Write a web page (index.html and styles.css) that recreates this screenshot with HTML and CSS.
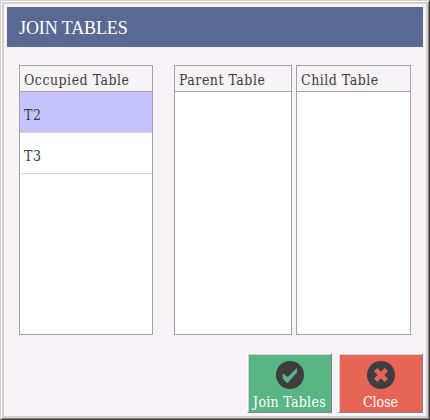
FILE: index.html
```html
<!DOCTYPE html>
<html lang="en">
<head>
<meta charset="utf-8">
<title>Join Tables</title>
<link rel="stylesheet" href="styles.css">
</head>
<body>
<main class="window">
  <div class="frame">
    <h1 class="title">JOIN TABLES</h1>
    <div class="lists">
      <section class="list occupied">
        <h2>Occupied Table</h2>
        <div class="row selected">T2</div>
        <div class="row">T3</div>
      </section>
      <section class="list parent"><h2>Parent Table</h2></section>
      <section class="list child"><h2>Child Table</h2></section>
    </div>
    <div class="actions">
      <button class="btn join">
        <svg width="28" height="28" viewBox="0 0 28 28"><circle cx="14" cy="14" r="14" fill="#403d41"/><path d="M6.7 12.3L11.7 16L21 7V11.5L11.3 22.3L6.7 17.5Z" fill="#5ab584"/></svg>
        <span>Join Tables</span>
      </button>
      <button class="btn close">
        <svg width="28" height="28" viewBox="0 0 28 28"><circle cx="14" cy="14" r="14" fill="#403d41"/><path d="M10.3 7L14 10.7L17.7 7L21 10.3L17.3 14L21 17.7L17.7 21L14 17.3L10.3 21L7 17.7L10.7 14L7 10.3Z" fill="#e66557"/></svg>
        <span>Close</span>
      </button>
    </div>
  </div>
</main>
</body>
</html>
```
FILE: styles.css
```css
* { box-sizing: border-box; }
body { margin: 0; background: #f7f3f7; }
.window {
  width: 430px;
  height: 420px;
  border: 1px solid;
  border-color: #d6d0cd #403d41 #403d41 #d6d0cd;
}
.frame {
  height: 418px;
  padding: 5px;
  border: 1px solid;
  border-color: #fff #848084 #848084 #fff;
  box-shadow: inset 0 0 0 2px #d6d0cd;
}
.title {
  margin: 0;
  height: 40px;
  padding: 1px 12px 0;
  background: #5a6994;
  color: #fff;
  font: 400 18px/40px "Liberation Serif", serif;
  letter-spacing: -0.1px;
}
.lists {
  display: flex;
  padding: 18px 0 0 12px;
  height: 288px;
}
.list {
  border: 1px solid #a5a2a5;
  background: #fff;
  color: #403d41;
  font: 400 14px/20px "DejaVu Serif Condensed", "DejaVu Serif", serif;
  font-stretch: condensed;
  letter-spacing: 0.5px;
  white-space: nowrap;
}
.occupied { width: 134px; margin-right: 21px; }
.parent { width: 118px; margin-right: 4px; }
.child { width: 115px; }
.list h2 {
  margin: 0;
  height: 26px;
  padding: 4px 0 0 4px;
  font: inherit;
  background: #f7f3f7;
  border-bottom: 1px solid #a5a2a5;
}
.row {
  height: 41px;
  padding: 13px 4px 0;
  border-bottom: 1px solid #d6d3d6;
}
.selected { background: #c6c3ff; }
.actions {
  display: flex;
  justify-content: flex-end;
  gap: 6px;
  padding-top: 18px;
}
.btn {
  width: 85px;
  height: 60px;
  padding: 7px 0 0;
  border: 1px solid;
  border-color: #fff #848084 #848084 #fff;
  box-shadow: inset 1px 1px 0 #d6d0cd;
  display: flex;
  flex-direction: column;
  align-items: center;
  color: #fff;
  font: 400 14px/20px "DejaVu Serif Condensed", "DejaVu Serif", serif;
  font-stretch: condensed;
  white-space: nowrap;
}
.btn svg { display: block; flex: none; }
.btn span { margin-top: 3px; }
.join { background: #5ab584; letter-spacing: 0.3px; }
.close { background: #e66557; }
```
